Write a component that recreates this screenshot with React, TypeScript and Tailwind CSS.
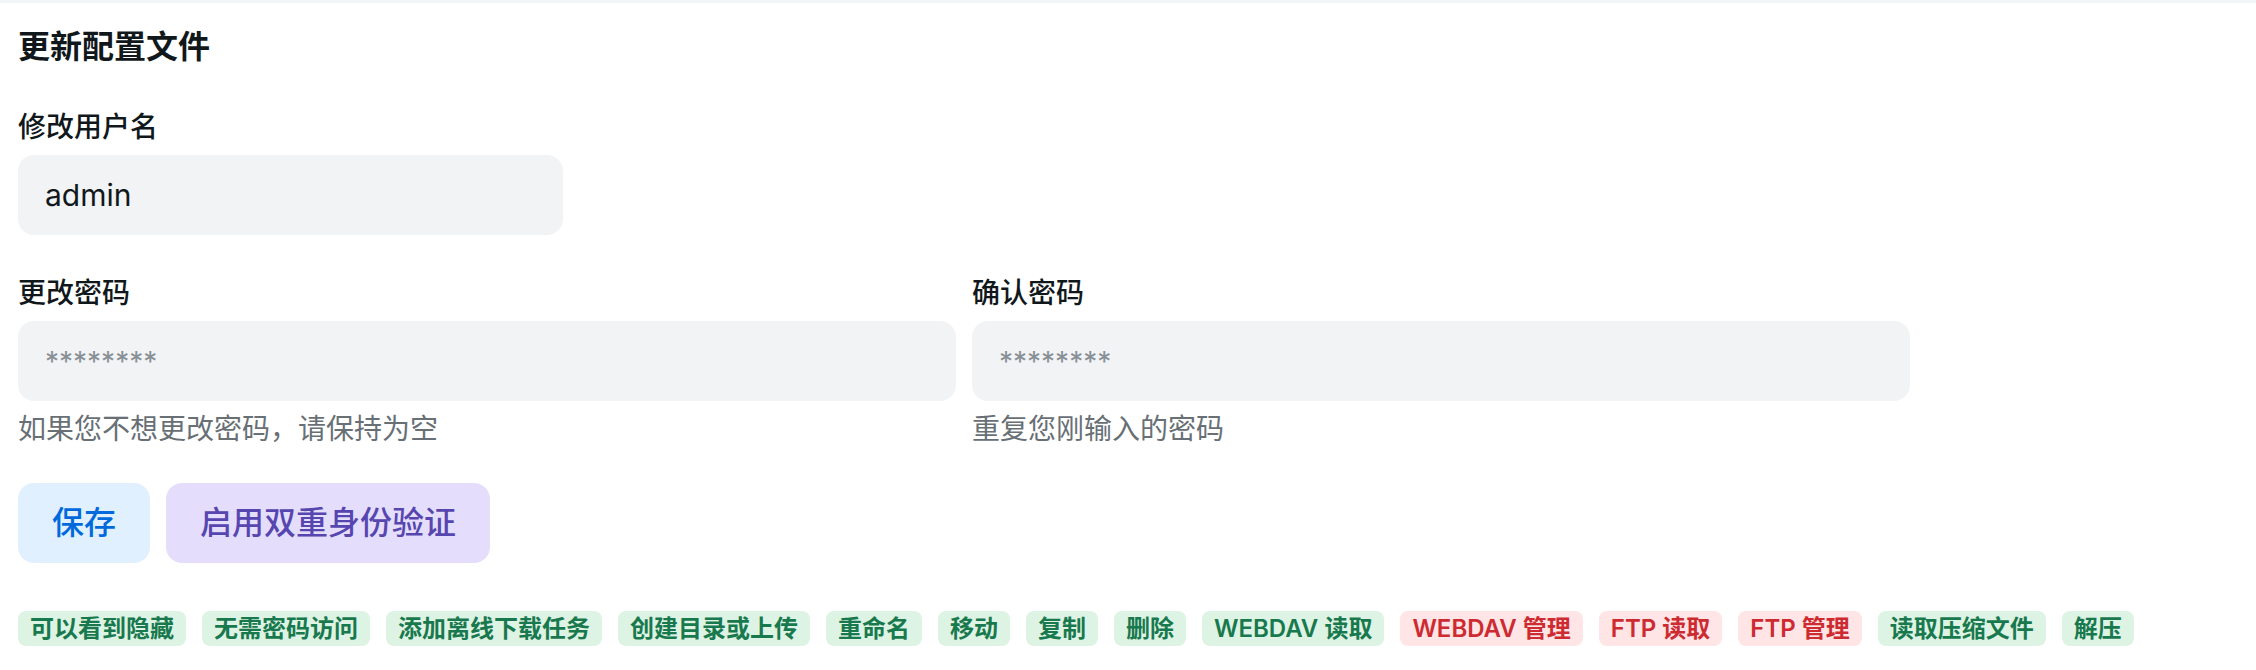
import { useState } from "react";

type Perm = { label: string; danger?: boolean };

const permissions: Perm[] = [
  { label: "可以看到隐藏" },
  { label: "无需密码访问" },
  { label: "添加离线下载任务" },
  { label: "创建目录或上传" },
  { label: "重命名" },
  { label: "移动" },
  { label: "复制" },
  { label: "删除" },
  { label: "WEBDAV 读取" },
  { label: "WEBDAV 管理", danger: true },
  { label: "FTP 读取", danger: true },
  { label: "FTP 管理", danger: true },
  { label: "读取压缩文件" },
  { label: "解压" },
];

const inputClass =
  "w-full h-[80px] rounded-[16px] bg-[#f1f3f5] px-[27px] text-[30px] text-[#11181c] placeholder:text-[28px] placeholder-[#889096] outline-none";

export default function App() {
  const [username, setUsername] = useState("admin");
  const [password, setPassword] = useState("");
  const [confirm, setConfirm] = useState("");

  return (
    <div className="min-h-screen bg-white font-['Inter','Noto_Sans_CJK_SC',sans-serif] text-[#11181c]">
      <div className="h-[3px] bg-[#f3f4f5]" />
      <div className="px-[18px]">
        <h2 className="mt-[20px] text-[32px] leading-[48px] font-semibold">更新配置文件</h2>

        {/* Username */}
        <label className="mt-[36px] block text-[28px] leading-[40px] font-medium">修改用户名</label>
        <input
          type="text"
          value={username}
          onChange={(e) => setUsername(e.target.value)}
          className={`mt-[8px] !w-[545px] ${inputClass}`}
        />

        {/* Passwords */}
        <div className="mt-[38px] grid w-[1892px] grid-cols-2 gap-x-[16px]">
          <div className="flex flex-col">
            <label className="text-[28px] leading-[40px] font-medium">更改密码</label>
            <input
              type="password"
              value={password}
              onChange={(e) => setPassword(e.target.value)}
              placeholder="********"
              className={`mt-[8px] ${inputClass}`}
            />
            <p className="mt-[8px] text-[28px] leading-[40px] text-[#687076]">如果您不想更改密码，请保持为空</p>
          </div>
          <div className="flex flex-col">
            <label className="text-[28px] leading-[40px] font-medium">确认密码</label>
            <input
              type="password"
              value={confirm}
              onChange={(e) => setConfirm(e.target.value)}
              placeholder="********"
              className={`mt-[8px] ${inputClass}`}
            />
            <p className="mt-[8px] text-[28px] leading-[40px] text-[#687076]">重复您刚输入的密码</p>
          </div>
        </div>

        {/* Actions */}
        <div className="mt-[34px] flex gap-[16px]">
          <button className="h-[80px] rounded-[16px] bg-[#e1f0ff] px-[34px] text-[32px] font-medium text-[#006adc]">
            保存
          </button>
          <button className="h-[80px] rounded-[16px] bg-[#e4defc] px-[34px] text-[32px] font-medium text-[#5746af]">
            启用双重身份验证
          </button>
        </div>

        {/* Permissions */}
        <div className="mt-[48px] flex flex-wrap gap-[16px]">
          {permissions.map((p) => (
            <span
              key={p.label}
              className={
                p.danger
                  ? "h-[35px] rounded-[8px] bg-[#ffe5e5] px-[12px] text-[24px] leading-[35px] font-semibold text-[#cd2b31]"
                  : "h-[35px] rounded-[8px] bg-[#ddf3e4] px-[12px] text-[24px] leading-[35px] font-semibold text-[#18794e]"
              }
            >
              {p.label}
            </span>
          ))}
        </div>
      </div>
    </div>
  );
}
